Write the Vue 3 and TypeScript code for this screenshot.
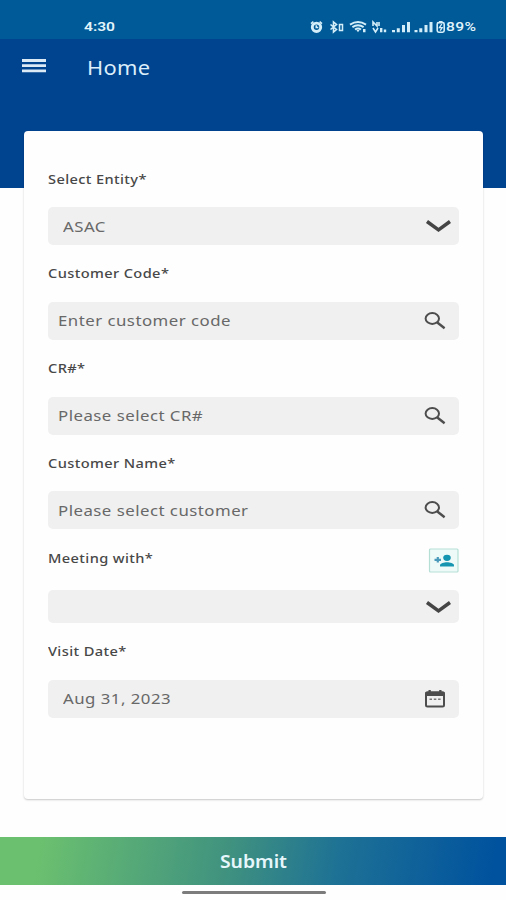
<script setup lang="ts">
type IconName = 'chevron' | 'search' | 'calendar'

interface Field {
  id: string
  label: string
  text: string
  icon: IconName
  indent?: boolean
  addPerson?: boolean
}

const fields: Field[] = [
  { id: 'entity', label: 'Select Entity*', text: 'ASAC', icon: 'chevron', indent: true },
  { id: 'code', label: 'Customer Code*', text: 'Enter customer code', icon: 'search' },
  { id: 'cr', label: 'CR#*', text: 'Please select CR#', icon: 'search' },
  { id: 'name', label: 'Customer Name*', text: 'Please select customer', icon: 'search' },
  { id: 'meeting', label: 'Meeting with*', text: '', icon: 'chevron', addPerson: true },
  { id: 'date', label: 'Visit Date*', text: 'Aug 31, 2023', icon: 'calendar', indent: true },
]
</script>

<template>
  <div class="screen">
    <header class="top">
      <div class="status">
        <span class="clock">4:30</span>
        <svg class="indicators" width="136" height="14" viewBox="0 0 136 14">
          <g fill="none" stroke="#d3eef9">
            <circle cx="6.5" cy="7.3" r="4.2" stroke-width="2.9" />
            <path d="M1 3.6 3.400 1.600M12 3.600 9.600 1.600M6.300 5.300v2.200h2" stroke-width="1.6" />
            <path d="M20.500 4.500l6 5-3 2.500V2l3 2.500-6 5" stroke-width="1.600" />
            <path d="M29.500 4.500h3v6h-3z" stroke-width="1.500" />
            <path d="M40 4.600q8-5 16 0M42.400 7.100q5.600-3.500 11.200 0M45 9.500q3-2 6 0" stroke-width="2" />
            <path d="M63 6V2l4 4V2M69 2v4M63 8l2.500 4L68 8" stroke-width="1.600" />
            <rect x="127.200" y="2.600" width="7" height="9.600" rx="1.600" stroke-width="1.600" />
            <path d="M131.800 4l-2.400 3.600h2.800l-2 3" stroke-width="1.300" />
          </g>
          <g fill="#d3eef9">
            <path d="M46.400 10h3.200L48 12.300zM53 9h2.500v3.300H53zM70 8h2.400v4.300H70zM73.800 9.600h2.400v2.700h-2.400z" />
            <path d="M82 10h3v2.300h-3zM86.800 8.200h3v4.100h-3zM92 5h3v7.300h-3zM97 2h3v10.300h-3z" />
            <path d="M104.500 10h3v2.300h-3zM109.300 8.200h3v4.100h-3zM114.500 5h3v7.300h-3zM119.500 2h3v10.300h-3z" />
            <path d="M129 1h3.500v1.500H129z" />
          </g>
        </svg>
        <span class="battery">89%</span>
      </div>
      <div class="appbar">
        <svg class="menu" width="24" height="16" viewBox="0 0 24 16">
          <path d="M0 2.500h24M0 7.700h24M0 12.900h24" stroke="#dceaf6" stroke-width="2.800" />
        </svg>
        <h1 class="title">Home</h1>
      </div>
    </header>

    <main class="card">
      <section v-for="f in fields" :key="f.id" class="field" :class="{ compact: f.addPerson }">
        <div class="label-row">
          <span class="label">{{ f.label }}</span>
          <svg v-if="f.addPerson" class="add" width="31" height="25" viewBox="0 0 31 25">
            <rect x="1.500" y="1" width="28.500" height="23" rx="1" fill="#eefaf8" stroke="#b5dfd5" stroke-width="1.200" />
            <path d="M6.500 11.800h6.500M9.800 9v5.600" stroke="#4b9abb" stroke-width="2.200" />
            <ellipse cx="19" cy="9.800" rx="3.800" ry="3.100" fill="#1695b1" />
            <path d="M12 18.500v-1.300c0-2 4.200-3 7-3s7 1 7 3v1.300z" fill="#1695b1" />
          </svg>
        </div>
        <div class="control" :class="{ indent: f.indent }">
          <span class="value">{{ f.text }}</span>
          <svg v-if="f.icon === 'chevron'" class="chevron" width="26" height="14" viewBox="0 0 26 14">
            <path d="M2 2.500 13.500 10.800 25 2.500" fill="none" stroke="#454545" stroke-width="3.500" />
          </svg>
          <svg v-else-if="f.icon === 'search'" class="search" width="22" height="18" viewBox="0 0 22 18">
            <ellipse cx="8.300" cy="6.500" rx="6.700" ry="5.400" fill="none" stroke="#4d4d4d" stroke-width="2" />
            <path d="M13 10.300l7.600 6" stroke="#4d4d4d" stroke-width="2.400" />
          </svg>
          <svg v-else class="calendar" width="22" height="20" viewBox="0 0 22 20">
            <rect x="2" y="3.200" width="18" height="14.300" rx="1.500" fill="none" stroke="#4d4d4d" stroke-width="2" />
            <path d="M1.500 3h19v4h-19zM4.500 1h2.300v3H4.500zM15.200 1h2.300v3h-2.300z" fill="#4d4d4d" />
            <path d="M5.500 10.300h2.500M9.800 10.300h2.500M14.100 10.300h2.500" stroke="#777" stroke-width="1.600" />
          </svg>
        </div>
      </section>
    </main>

    <button class="submit" type="button"><span>Submit</span></button>
    <div class="gesture"></div>
  </div>
</template>

<style>
body {
  margin: 0;
  background: #fff;
}
</style>

<style scoped>
.screen {
  display: flex;
  flex-direction: column;
  width: 506px;
  height: 900px;
  overflow: hidden;
  background: #fefefe;
  font-family: 'Noto Sans', 'Open Sans', sans-serif;
}

.top {
  flex: none;
  height: 188px;
  background: #00438f;
}

.status {
  display: flex;
  align-items: center;
  box-sizing: border-box;
  height: 39px;
  padding: 14px 0 0 84px;
  background: #005a97;
  color: #e2f4fb;
  font-family: Roboto, sans-serif;
  font-weight: 500;
}

.clock,
.battery {
  flex: none;
  font-size: 13px;
  line-height: 25px;
  transform: scaleX(1.2);
  transform-origin: left center;
}

.clock {
  width: 226px;
  font-weight: 600;
}

.battery {
  letter-spacing: 0.3px;
}

.indicators {
  flex: none;
}

.appbar {
  display: flex;
  align-items: center;
  height: 54px;
  padding-left: 22px;
}

.title {
  margin: 3px 0 0 41px;
  color: #dceefa;
  font-size: 19px;
  font-weight: 400;
  letter-spacing: 0.3px;
  transform: scaleX(1.15);
  transform-origin: left center;
}

.card {
  display: flex;
  flex: none;
  flex-direction: column;
  gap: 18.8px;
  box-sizing: border-box;
  width: 459px;
  height: 668px;
  margin: -57px 0 0 24px;
  padding: 38px 24px 0;
  border-radius: 4px;
  background: #fefefe;
  box-shadow: 0 1px 2px rgba(0, 0, 0, 0.22);
}

.label-row {
  display: flex;
  align-items: center;
  justify-content: space-between;
  height: 20px;
  margin-bottom: 18px;
}

.label {
  color: #484848;
  font-size: 12.5px;
  font-weight: 500;
  letter-spacing: 0.32px;
  white-space: nowrap;
  transform: scaleX(1.17);
  transform-origin: left center;
}

.add {
  margin-top: 4px;
}

.control {
  display: flex;
  align-items: center;
  justify-content: space-between;
  box-sizing: border-box;
  height: 38px;
  padding: 0 13px 0 10px;
  border-radius: 5px;
  background: #f0f0f0;
}

.control.indent {
  padding-left: 15px;
}

.compact .label-row {
  margin-bottom: 22px;
}

.compact .control {
  height: 33px;
}

.value {
  color: #686868;
  font-size: 14px;
  letter-spacing: 0.4px;
  white-space: nowrap;
  transform: scaleX(1.2);
  transform-origin: left center;
}

.chevron {
  margin-right: -5px;
}

.submit {
  flex: none;
  height: 48px;
  margin-top: 38px;
  padding: 0;
  border: 0;
  background: linear-gradient(100deg, #6bc06f 8%, #40927f 45%, #1d7195 67%, #00529e 97%);
  color: #e6f6fb;
  font: 600 17px 'Noto Sans', 'Open Sans', sans-serif;
}

.submit span {
  display: inline-block;
  transform: scaleX(1.14);
}

.gesture {
  flex: none;
  width: 144px;
  height: 3px;
  margin: 6px 0 0 182px;
  border-radius: 2px;
  background: #7c7c7c;
}
</style>
